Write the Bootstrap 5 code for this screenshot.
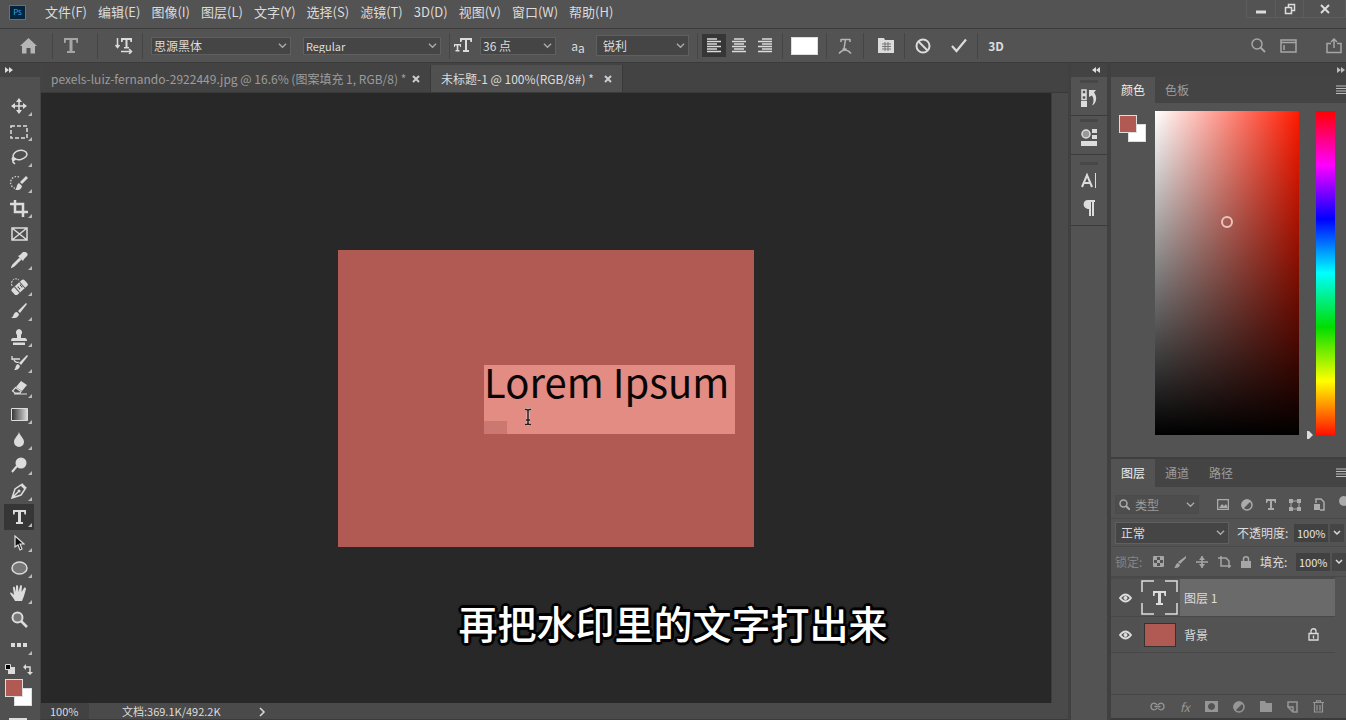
<!DOCTYPE html>
<html lang="zh-CN">
<head>
<meta charset="utf-8">
<meta name="viewport" content="width=device-width, initial-scale=1">
<title>未标题-1</title>
<link href="https://cdn.jsdelivr.net/npm/bootstrap@5.3.0/dist/css/bootstrap.min.css" rel="stylesheet">
<style>
:root{--bar:#535353;--dark:#434343;--line:#3b3b3b;--field:#454545;--ink:#dcdcdc;--dim:#9c9c9c;--brick:#b05a53}
body{background:var(--bar);color:var(--ink);font-family:"Noto Sans CJK SC",sans-serif;font-size:12px;line-height:16px}
button,a.menu-item{background:none;border:0;padding:0;color:inherit;text-decoration:none;white-space:nowrap}
svg{display:block;fill:none;stroke:currentColor;stroke-width:1.5}
svg .f{fill:currentColor;stroke:none}
.ib{display:flex;align-items:center;justify-content:center;flex:none}
.w22{width:22px}.w24{width:24px}.w26{width:26px}.w36{width:36px}.w48{width:48px}
.menubar{height:28px}
.menubar nav{gap:11px;margin-left:19px;padding-bottom:4px;font-size:13px}
.logo{width:17px;height:15px;margin:0 0 3px 9px;background:#04233d;border:1px solid #2387b8;color:#31a8e0;font-size:8px;line-height:12px;text-align:center}
.winbtns{border:1px solid #5d5d5d;border-top:0;height:18px;align-self:flex-start}
.winbtns button{height:18px;width:28px}
.winbtns button:last-child{width:42px}
.winbtns button+button{border-left:1px solid #5d5d5d}
.optbar{height:35px;border-top:1px solid var(--line);border-bottom:1px solid var(--line)}
.vsep{width:1px;height:26px;background:#454545;flex:none}
.form-select.ps{width:auto;min-height:0;height:18px;border:1px solid #5f5f5f;border-radius:0;background-color:var(--field);color:var(--ink);font-size:12px;line-height:14px;padding:0 18px 0 2px;background-position:right 3px center;background-size:9px 9px;flex:none;
--bs-form-select-bg-img:url("data:image/svg+xml,%3csvg xmlns='http://www.w3.org/2000/svg' viewBox='0 0 10 10'%3e%3cpath fill='none' stroke='%23aaaaaa' stroke-width='1.5' d='M1 3l4 4 4-4'/%3e%3c/svg%3e");background-image:var(--bs-form-select-bg-img)}
.ps.family{width:140px}
.form-select.ps.style{width:138px;margin-left:12px;font-size:11px}
.ps.size{width:76px}
.ps.aa{width:93px;height:21px;padding-left:6px}
.ps.blend{width:114px;height:22px;padding-left:5px}
.form-select.ps.kind{width:84px;height:19px;padding-left:19px;background-color:#4d4d4d;border-color:#4b4b4b;color:var(--dim)}
.on{background:#363636}
.white-chip{width:27px;height:18px;background:#fff;border:1px solid #ddd}
.tools{width:41px;background:#505050;border-right:1px solid #444;flex:none}
.grip{height:14px;background:var(--dark);flex:none}
.tool{position:relative;min-height:0;flex:1 1 0;width:30px;margin-left:4px}
.tool.more::after{content:"";position:absolute;right:2px;bottom:3px;border:2px solid transparent;border-right-color:#bbb;border-bottom-color:#bbb}
.toolfoot{height:62px;padding:6px 0 0 5px}
.swpair{display:grid;grid-template-columns:9px 9px 9px;grid-template-rows:9px 9px 9px}
.swpair i{border:1px solid #ddd}
.swpair i:first-child{background:#fff;grid-area:2/2/4/4}
.swpair i:last-child{background:var(--brick);grid-area:1/1/3/3;z-index:1}
.doctabs{height:30px;background:var(--dark);border-bottom:1px solid #393939}
.doctab{height:27px;border-right:1px solid #393939;color:var(--dim);padding:0 2px 0 10px}
.doctab.current{background:#505050;color:var(--ink)}
.doctab .t1{width:353px}.doctab .t2{width:155px}
.stage{background:#282828}
.art{width:416px;height:297px;background:var(--brick);padding:115px 0 0 146px}
.picked{position:relative;width:251px;height:69px;background:#e38c83;color:#0a0606;font-size:40px;line-height:32px;white-space:nowrap}
.patch{position:absolute;left:0;bottom:0;width:23px;height:13px;background:#cb7870}
.ibeam{position:absolute;left:39px;top:43px;color:#222}
.vscroll{width:17px;background:#4a4a4a;border-left:1px solid #3c3c3c}
.statusbar{height:17px;border-bottom:1px solid #3b3b3b;background:#4a4a4a;font-size:11px;line-height:16px}
.zoomval{width:48px;background:#424242;padding-left:9px}
.docsize{margin-left:33px;width:137px}
.dock{width:39px;border-left:3px solid #414141}
.dockgroup{border-bottom:1px solid var(--line);padding-bottom:3px}
.dockgroup::before{content:"";display:block;width:18px;height:3px;background:#474747;margin:0 auto;position:relative;top:3px}
.dockgroup button{width:100%;height:28px}
.dockgroup button:first-child{margin-top:4px}
.side{width:239px;border-left:4px solid #404040;flex:none;overflow:hidden}
.ptabs{background:#444;color:var(--dim);flex:none}
.ptabs button{width:44px}
.ptabs button.pmenu{width:11px}
.ptabs button.current{background:var(--bar);color:#eee}
.colorpanel{height:380px}
.spectrum{background:linear-gradient(to top,#000,transparent),linear-gradient(to right,#fff,#ff1a00);width:144px;height:324px;position:relative}
.pick{position:absolute;left:66px;top:105px;width:12px;height:12px;border:2px solid #e9c4bd;border-radius:50%}
.hue{width:19px;height:324px;background:linear-gradient(red,#f0f,#00f,#0ff,#0d0,#ff0,#f10)}
.huemark{width:17px;padding-left:7px;margin-bottom:-6px}
.lrow{border-bottom:1px solid #494949;flex:none}
.pct{width:34px;height:18px;border:0;background:#414141;color:#e6e6e6;font-size:11px;padding:0 0 0 3px}
.dropbit{width:14px;height:18px;background:var(--field);margin-left:2px}
.layer{height:36px;margin-right:11px;border-bottom:1px solid #484848;flex:none}
.layer.chosen{height:40px;background:#6a6a6a;border-top:2px solid #4b4b4b}
.eye{width:29px;align-self:stretch;background:#515151}
.thumb{width:32px;height:24px;background:var(--brick);border:1px solid #333;margin:0 4px}
.lfoot{height:26px;border-top:1px solid #464646;border-bottom:2px solid #3b3b3b;color:#969696;padding:0 22px 0 39px}
.caption-line{position:absolute;left:0;right:0;top:83%;font-size:39px;line-height:48px;font-weight:500;color:#fff;text-align:center;pointer-events:none;
text-shadow:-3px 0 #000,3px 0 #000,0 -3px #000,0 3px #000,-2px -2px #000,2px -2px #000,-2px 2px #000,2px 2px #000,0 0 4px #000}
</style>
<script src="https://cdn.jsdelivr.net/npm/bootstrap@5.3.0/dist/js/bootstrap.bundle.min.js"></script>
</head>
<body class="vh-100 d-flex flex-column overflow-hidden position-relative">

<header class="menubar d-flex align-items-center flex-shrink-0">
  <div class="logo">Ps</div>
  <nav class="d-flex">
    <a class="menu-item" href="#">文件(F)</a><a class="menu-item" href="#">编辑(E)</a><a class="menu-item" href="#">图像(I)</a><a class="menu-item" href="#">图层(L)</a><a class="menu-item" href="#">文字(Y)</a><a class="menu-item" href="#">选择(S)</a><a class="menu-item" href="#">滤镜(T)</a><a class="menu-item" href="#">3D(D)</a><a class="menu-item" href="#">视图(V)</a><a class="menu-item" href="#">窗口(W)</a><a class="menu-item" href="#">帮助(H)</a>
  </nav>
  <div class="winbtns d-flex ms-auto">
    <button class="ib" aria-label="最小化"><svg width="12" height="12"><path d="M1 9h10" stroke-width="3"/></svg></button>
    <button class="ib" aria-label="还原"><svg width="12" height="12"><path d="M4.500 4V1.500h6v6H8M1.500 4.500h6v6h-6z"/></svg></button>
    <button class="ib" aria-label="关闭"><svg width="10" height="10"><path d="M1 1l8 8M9 1l-8 8" stroke-width="2"/></svg></button>
  </div>
</header>

<section class="optbar d-flex align-items-center flex-shrink-0">
  <button class="ib w48 ms-1" aria-label="主页"><svg width="17" height="16" color="#b5b5b5"><path class="f" d="M8.500 0L17 8h-2v7.500h-4.500V10h-4v5.500H2V8H0z"/></svg></button>
  <span class="vsep"></span>
  <button class="ib w36" aria-label="文字工具"><svg width="14" height="15" color="#a5a5a5"><path class="f" d="M0 0h14v5h-1.500L12 2H8.500v11H11v2H3v-2h2.500V2H2l-.5 3H0z"/></svg></button>
  <span class="vsep ms-2"></span>
  <button class="ib w36 ms-2" aria-label="切换文本取向"><svg width="18" height="17"><path d="M2.500 1v9M.5 8l2 2.500 2-2.500M6 14.500h10M14 12l2.500 2.500L14 17"/><path class="f" d="M6 1h11v4h-1.500L15 3h-2.500v7H14v1.500H9V10h1.500V3H8l-.5 2H6z"/></svg></button>
  <span class="vsep"></span>
  <select class="form-select ps family ms-2" aria-label="字体"><option>思源黑体</option></select>
  <select class="form-select ps style" aria-label="字体样式"><option>Regular</option></select>
  <span class="vsep ms-2"></span>
  <span class="ib w26"><svg width="18" height="15"><path class="f" d="M6 0h12v4h-1.500L16 2h-3v10h2v2H9v-2h2V2H8l-.5 2H6zM0 6h7v3H6V7.500H4.300V12H5.500v1.500h-4V12h1.200V7.500H1V9H0z"/></svg></span>
  <select class="form-select ps size ms-1" aria-label="字号"><option>36 点</option></select>
  <span class="ib w36 ms-1"><span>a</span><span class="pt-1">a</span></span>
  <select class="form-select ps aa" aria-label="消除锯齿"><option>锐利</option></select>
  <span class="vsep ms-2"></span>
  <div class="btn-group ms-1">
    <button class="ib w24 on py-1" aria-label="左对齐"><svg width="14" height="15"><path d="M0 1h10M0 3.500h14M0 6h10M0 8.500h14M0 11h10M0 13.500h14"/></svg></button>
    <button class="ib w26 py-1 ms-0" aria-label="居中对齐"><svg width="14" height="15"><path d="M2 1h10M0 3.500h14M2 6h10M0 8.500h14M2 11h10M0 13.500h14"/></svg></button>
    <button class="ib w26 py-1 ms-0" aria-label="右对齐"><svg width="14" height="15"><path d="M4 1h10M0 3.500h14M4 6h10M0 8.500h14M4 11h10M0 13.500h14"/></svg></button>
  </div>
  <span class="vsep ms-1"></span>
  <button class="white-chip ms-2" aria-label="文本颜色"></button>
  <span class="vsep ms-2"></span>
  <button class="ib w36" aria-label="变形文字"><svg width="14" height="16" color="#b5b5b5"><path d="M3 1.500h9M7.500 1.500L6 11M4.500 11h4M1 15.500q6-7 12 0M3 1v3M12 1v3"/></svg></button>
  <span class="vsep"></span>
  <button class="ib w36 ms-1" aria-label="字符面板"><svg width="16" height="15"><path class="f" d="M0 0h6l1 2h9v13H0z"/><path d="M4 6h9M4 8.500h9M4 11h9M7 4v9M10 4v9" stroke="#777" stroke-width="1"/></svg></button>
  <span class="vsep"></span>
  <button class="ib w36" aria-label="取消"><svg width="16" height="16"><circle cx="8" cy="8" r="6.500" stroke-width="2"/><path d="M3.500 3.500l9 9" stroke-width="2"/></svg></button>
  <button class="ib w36" aria-label="提交"><svg width="16" height="15"><path d="M1 8l4.500 5L15 1.500" stroke-width="2.200"/></svg></button>
  <span class="vsep"></span>
  <button class="ib w36 fw-bold" aria-label="3D">3D</button>
  <div class="d-flex ms-auto" style="color:#a6a6a6">
    <button class="ib w24" aria-label="搜索"><svg width="15" height="15"><circle cx="6" cy="6" r="5"/><path d="M9.500 9.500L14 14" stroke-width="2"/></svg></button>
    <button class="ib w36" aria-label="工作区"><svg width="17" height="14"><path d="M1 1h15v12H1zM1 3.500h15"/><path d="M4 6v5"/></svg></button>
    <button class="ib w24 ms-3" aria-label="共享"><svg width="16" height="16"><path d="M5 5.500H1v9h14v-9h-4M8 10V1M5 4l3-3 3 3"/></svg></button>
  </div>
</section>

<main class="d-flex flex-grow-1" style="min-height:0">
  <aside class="tools d-flex flex-column">
    <div class="grip"><svg class="ms-1 pt-1" width="12" height="10"><path class="f" d="M1 0l4 3-4 3zM5 0l4 3-4 3z"/></svg></div>
    <div class="d-flex flex-column flex-grow-1 pt-3">
      <button class="tool ib more" aria-label="移动"><svg width="16" height="16"><path d="M8 2v12M2 8h12"/><path class="f" d="M8 0l3 4H5zM8 16l3-4H5zM0 8l4-3v6zM16 8l-4-3v6z"/></svg></button>
      <button class="tool ib more" aria-label="矩形选框"><svg width="18" height="14"><path d="M1 1h16v12H1z" stroke-dasharray="4 2"/></svg></button>
      <button class="tool ib more" aria-label="套索"><svg width="18" height="16"><ellipse cx="10" cy="6" rx="7" ry="4.500" transform="rotate(-12 10 6)"/><path d="M3.500 8c-3 2 0 4 1.500 2.500S2 9 3 13l2 2"/></svg></button>
      <button class="tool ib more" aria-label="快速选择"><svg width="18" height="16"><path d="M9 2a6 6 0 1 0 0 11" stroke-dasharray="1.500 1.500" stroke-width="1.200"/><path class="f" d="M16 1l2 2-6 6-2-2zM9 8l3 3c-1 5-5 4-7 4 2-1 1-5 4-7z"/></svg></button>
      <button class="tool ib more" aria-label="裁剪"><svg width="18" height="17"><path d="M0 4h13v9M5 0v12h13M13 12v5" stroke-width="2.500"/></svg></button>
      <button class="tool ib" aria-label="图框"><svg width="17" height="14"><path d="M1 1h15v12H1zM1 1l15 12M16 1L1 13"/></svg></button>
      <button class="tool ib more" aria-label="吸管"><svg width="17" height="16"><path d="M9 6l-7 7-1 2 2-1 7-7"/><path class="f" d="M7 4l2-1 3-3c3-1 6 2 4 4l-3 3-1 2z"/></svg></button>
      <button class="tool ib more" aria-label="污点修复"><svg width="18" height="18"><g transform="rotate(-42 10 10)"><rect class="f" x="1" y="6" width="17" height="8" rx="2"/><path d="M6 6v8M13 6v8" stroke="#555" stroke-width="1"/><path d="M8 9h1M11 9h1M8 11h1M11 11h1" stroke="#444"/></g><path d="M2 9c-2-6 3-9 7-6" stroke-dasharray="2 1" stroke-width="1"/></svg></button>
      <button class="tool ib more" aria-label="画笔"><svg width="16" height="16"><path class="f" d="M15 0l1 1-7 9-2-2zM6 9l2 2c-1 5-6 4-8 4 3-1 2-6 6-6z"/></svg></button>
      <button class="tool ib more" aria-label="仿制图章"><svg width="16" height="16"><path class="f" d="M8 0a3.500 3.500 0 0 1 2 6v3h4c1 0 2 1 2 3H0c0-2 1-3 2-3h4V6a3.500 3.500 0 0 1 2-6zM2 13.500h12V16H2z"/></svg></button>
      <button class="tool ib more" aria-label="历史记录画笔"><svg width="17" height="16"><path d="M1 4h8M1 1v4M3 5c1 2 3 3 5 2" stroke-width="1.300"/><path class="f" d="M16 0l1 1-7 9-2-2zM7 9l2 2c-1 4-4 4-6 4 2-1 1-5 4-6z"/></svg></button>
      <button class="tool ib more" aria-label="橡皮擦"><svg width="17" height="14"><path class="f" d="M10 0l6 4-5 6-6-4z"/><path d="M4.500 6.500l5.500 4-1 1.500H4L1.500 10zM3 13h13" stroke-width="1.200"/></svg></button>
      <button class="tool ib more" aria-label="渐变"><svg width="17" height="13"><defs><linearGradient id="gr"><stop stop-color="#333"/><stop offset="1" stop-color="#ddd"/></linearGradient></defs><path d="M.5 .5h16v12H.5z" fill="url(#gr)" stroke-width="1"/></svg></button>
      <button class="tool ib more" aria-label="模糊"><svg width="12" height="15"><path class="f" d="M6 0c1 4 5 6 5 10a5 5 0 0 1-10 0c0-4 4-6 5-10z"/></svg></button>
      <button class="tool ib more" aria-label="减淡"><svg width="16" height="16"><circle class="f" cx="10" cy="6" r="5.500"/><path d="M6 9l-5 6" stroke-width="2"/></svg></button>
      <button class="tool ib more" aria-label="钢笔"><svg width="16" height="16"><path d="M1 15L4 6l6-4 4 4-4 6zM1 15l6-6"/><path class="f" d="M11 0l5 5-2 1-4-4z"/><circle class="f" cx="8" cy="8" r="1.500"/></svg></button>
      <button class="tool ib more on" aria-label="横排文字"><svg width="13" height="14"><path class="f" d="M0 0h13v4.500h-1.500L11 2H8v10h2v2H3v-2h2V2H2l-.5 2.500H0z"/></svg></button>
      <button class="tool ib more" aria-label="路径选择"><svg width="12" height="16"><path d="M2 1v11l3-2 2 5 2-1-2-5h4z" fill="#111" stroke-width="1.200"/></svg></button>
      <button class="tool ib more" aria-label="椭圆"><svg width="17" height="14"><ellipse cx="8.500" cy="7" rx="7.500" ry="6" fill="#777"/></svg></button>
      <button class="tool ib more" aria-label="抓手"><svg width="18" height="17"><path class="f" d="M5 16C4 13 1 11 0 8c1-1 2 0 4 2L3 3c0-2 2-1 2 0l1 4V1c0-1 2-1 2 0l.5 6L10 1c0-1 2-1 2 0l-.5 6L14 3c1-1 2 0 2 1l-2 7-2 5z"/></svg></button>
      <button class="tool ib" aria-label="缩放"><svg width="17" height="17"><circle cx="6.500" cy="6.500" r="5" fill="#777" stroke-width="2"/><path d="M10 10l6 6" stroke-width="2.500"/></svg></button>
      <button class="tool ib more" aria-label="编辑工具栏"><svg width="17" height="4"><path class="f" d="M0 0h4v4H0zM6 0h4v4H6zM12 0h4v4h-4z"/></svg></button>
    </div>
    <div class="toolfoot">
      <div class="d-flex gap-2 mb-1"><svg width="10" height="10"><path class="f" d="M3 3h7v7H3z"/><path d="M.5 .5h5v5h-5z" fill="#000" stroke-width="1"/></svg><svg width="10" height="11"><path d="M2 3h5v6"/><path class="f" d="M0 3l3-3v6zM7 11L4 8h6z"/></svg></div>
      <div class="swpair"><i></i><i></i></div>
      <svg class="ms-1 mt-2 pt-1" width="20" height="10"><path d="M1 1h16v8H1z" stroke-width="2"/></svg>
    </div>
  </aside>

  <section class="d-flex flex-column flex-grow-1" style="min-width:0">
    <div class="doctabs d-flex align-items-end flex-shrink-0">
      <div class="doctab d-flex align-items-center"><span class="t1 text-nowrap">pexels-luiz-fernando-2922449.jpg @ 16.6% (图案填充 1, RGB/8) *</span><button class="ib w24" aria-label="关闭标签"><svg width="8" height="8" color="#ccc"><path d="M1 1l6 6M7 1L1 7" stroke-width="2"/></svg></button></div>
      <div class="doctab current d-flex align-items-center"><span class="t2 text-nowrap">未标题-1 @ 100%(RGB/8#) *</span><button class="ib w24" aria-label="关闭标签"><svg width="8" height="8" color="#ccc"><path d="M1 1l6 6M7 1L1 7" stroke-width="2"/></svg></button></div>
    </div>
    <div class="d-flex flex-grow-1">
      <div class="stage flex-grow-1 d-flex align-items-center justify-content-center">
        <div class="art"><div class="picked">Lorem Ipsum<span class="patch"></span><svg class="ibeam" width="10" height="18"><path d="M2 1.500h2l1 1 1-1h2M2 16.500h2l1-1 1 1h2M5 2v14M3 12h4" stroke="#eee" stroke-width="3" opacity=".5"/><path d="M2 1.500h2l1 1 1-1h2M2 16.500h2l1-1 1 1h2M5 2v14M3 12h4"/></svg></div></div>
      </div>
      <div class="vscroll"></div>
    </div>
    <footer class="statusbar d-flex flex-shrink-0"><span class="zoomval">100%</span><span class="docsize text-nowrap">文档:369.1K/492.2K</span><svg class="mt-1" width="7" height="11"><path d="M1 1l4 4-4 4"/></svg></footer>
  </section>

  <div class="dock flex-shrink-0">
    <div class="grip"><svg class="ms-auto me-1 pt-1" width="12" height="10"><path class="f" d="M5 0L1 3l4 3zM9 0L5 3l4 3z"/></svg></div>
    <div class="dockgroup"><button class="ib" aria-label="历史记录"><svg width="16" height="18"><path d="M1 1h4v4H1zM1 6.500h4v4H1z"/><path class="f" d="M0 12h6v6H0zM8 1h7l-2 2.500c4 5 2 11-2 13 2-4 2-7 0-10L8 8z"/></svg></button></div>
    <div class="dockgroup"><button class="ib" aria-label="库"><svg width="16" height="17"><circle cx="5" cy="5" r="4" fill="#999"/><path class="f" d="M11 0h5v4h-5zM11 6h5v4h-5zM0 12h16v5H0z"/></svg></button></div>
    <div class="dockgroup pt-1"><button class="ib" aria-label="字符"><svg width="16" height="17"><path d="M1 15L6 3l5 12M3 11h6" stroke-width="2"/><path d="M14.500 1v15" stroke-width="1"/></svg></button><button class="ib" aria-label="段落"><svg width="12" height="16"><path class="f" d="M5 0h7v2h-1v14H9V2H8v14H6V9C-1 9-1 0 5 0z"/></svg></button></div>
  </div>

  <aside class="side d-flex flex-column">
    <div class="grip"><svg class="ms-auto pt-1" style="color:#bbb" width="9" height="10"><path class="f" d="M0 0l4 3-4 3zM4 0l4 3-4 3z"/></svg></div>
    <section class="colorpanel d-flex flex-column flex-shrink-0">
      <div class="ptabs d-flex" style="height:26px"><button class="current">颜色</button><button>色板</button><button class="ib ms-auto pmenu" aria-label="面板菜单"><svg width="10" height="10" color="#bbb"><path d="M0 1h10M0 3.500h10M0 6h10M0 8.500h10" stroke-width="1.200"/></svg></button></div>
      <div class="d-flex pt-2">
        <div class="pt-1 ps-2" style="width:44px"><div class="swpair"><i></i><i></i></div></div>
        <div class="spectrum"><span class="pick"></span></div>
        <div class="huemark align-self-end"><svg width="8" height="12"><path class="f" d="M1 2h2l4 4-4 4H1z"/></svg></div>
        <div class="hue"></div>
      </div>
    </section>
    <section class="d-flex flex-column flex-grow-1 border-top border-2" style="border-color:#3f3f3f!important">
      <div class="ptabs d-flex" style="height:28px"><button class="current">图层</button><button>通道</button><button>路径</button><button class="ib ms-auto pmenu" aria-label="面板菜单"><svg width="10" height="10" color="#bbb"><path d="M0 1h10M0 3.500h10M0 6h10M0 8.500h10" stroke-width="1.200"/></svg></button></div>
      <div class="lrow d-flex align-items-center pt-1 ps-1" style="height:32px;color:#ababab">
        <svg width="11" height="11" style="margin-right:-15px;margin-left:4px;z-index:1"><circle cx="4.500" cy="4.500" r="3.500"/><path d="M7 7l4 4" stroke-width="2"/></svg>
        <select class="form-select ps kind" aria-label="图层类型"><option>类型</option></select>
        <div class="d-flex flex-grow-1 ps-2">
          <button class="ib w24 ms-1" aria-label="像素"><svg width="12" height="11"><path d="M.5 .5h11v10H.5z"/><path class="f" d="M2 9l3-4 2 2 2-2 2 4z"/></svg></button>
          <button class="ib w24" aria-label="调整"><svg width="12" height="12"><circle cx="6" cy="6" r="5"/><path class="f" d="M2 10A5.500 5.500 0 0 1 10 2z"/></svg></button>
          <button class="ib w24" aria-label="文字"><svg width="10" height="11"><path class="f" d="M0 0h10v4H9L8 2H6v7h2v2H2V9h2V2H2L1 4H0z"/></svg></button>
          <button class="ib w24" aria-label="形状"><svg width="12" height="12"><path d="M2 2h8v8H2z" stroke-width="1"/><path class="f" d="M0 0h4v4H0zM8 0h4v4H8zM0 8h4v4H0zM8 8h4v4H8z"/></svg></button>
          <button class="ib w24" aria-label="智能对象"><svg width="11" height="13"><path d="M2 5V1h5l3 3v8H6"/><path class="f" d="M0 6h6v6H0z"/></svg></button>
        </div>
        <svg width="7" height="20"><circle class="f" cx="5" cy="6" r="5"/></svg>
      </div>
      <div class="lrow d-flex align-items-center ps-1" style="height:28px">
        <select class="form-select ps blend" aria-label="混合模式"><option>正常</option></select>
        <label class="text-nowrap ms-2" style="width:57px" for="op">不透明度:</label><input id="op" class="pct" value="100%"><button class="dropbit ib" aria-label="不透明度滑块"><svg width="8" height="6"><path d="M1 1l3 3 3-3"/></svg></button>
      </div>
      <div class="lrow d-flex align-items-center" style="height:30px">
        <span class="ms-1 text-nowrap" style="width:32px;color:#858585">锁定:</span>
        <div class="d-flex flex-grow-1" style="color:#a6a6a6">
          <button class="ib w22" aria-label="锁定透明像素"><svg width="11" height="11"><path d="M.5 .5h10v10H.5z" stroke-width="1"/><path class="f" d="M1 1h3v3H1zM7 1h3v3H7zM4 4h3v3H4zM1 7h3v3H1zM7 7h3v3H7z"/></svg></button>
          <button class="ib w22" aria-label="锁定图像像素"><svg width="12" height="12"><path class="f" d="M12 0v2L6 8 4 6zM4 7l2 2c-1 3-4 3-6 3 2-1 1-4 4-5z"/></svg></button>
          <button class="ib w22" aria-label="锁定位置"><svg width="12" height="12"><path d="M0 6h12M6 0v12"/><path class="f" d="M3 4l3-4 3 4zM3 8l3 4 3-4z"/></svg></button>
          <button class="ib w22" aria-label="防止自动嵌套"><svg width="13" height="12"><path d="M0 2h8l3 3v7M3 0v10h10"/></svg></button>
          <button class="ib w22" aria-label="锁定全部"><svg width="10" height="12"><path d="M2.500 5V3c0-3 5-3 5 0v2"/><path class="f" d="M0 5h10v7H0z"/></svg></button>
        </div>
        <label class="text-nowrap" style="width:36px" for="fl">填充:</label><input id="fl" class="pct" value="100%"><button class="dropbit ib" aria-label="填充滑块"><svg width="8" height="6"><path d="M1 1l3 3 3-3"/></svg></button>
      </div>
      <div class="layer chosen d-flex align-items-center">
        <button class="ib eye" aria-label="可见性"><svg width="13" height="10"><path d="M1 5q5.500-7 11 0q-5.500 7-11 0z" stroke-width="2"/><circle class="f" cx="6.500" cy="5" r="2"/></svg></button>
        <svg width="40" height="37" style="background:#555"><path d="M2 13V2h12M25 2h12v11M37 24v11H25M14 35H2V24" stroke-width="1.500"/><path class="f" d="M13 12h13v5h-1.500L24 14h-3v10h2v2h-7v-2h2V14h-3l-.5 3H13z"/></svg>
        <span class="ms-1">图层 1</span>
      </div>
      <div class="layer d-flex align-items-center">
        <button class="ib eye" aria-label="可见性"><svg width="13" height="10"><path d="M1 5q5.500-7 11 0q-5.500 7-11 0z" stroke-width="2"/><circle class="f" cx="6.500" cy="5" r="2"/></svg></button>
        <span class="thumb"></span><span class="ms-1">背景</span>
        <svg class="ms-auto me-3" width="11" height="13"><path d="M1 5.500h9V12H1zM3 5V3c0-3 5-3 5 0v2M5.500 7.500v3" stroke-width="1.300"/></svg>
      </div>
      <div class="lfoot d-flex align-items-center justify-content-between mt-auto">
        <button aria-label="链接图层"><svg width="15" height="9"><path d="M7 3C5 0 1 1 1 4.500S5 9 7 6M8 3c2-3 6-2 6 1.500S10 9 8 6M4.500 4.500h6" stroke-width="1.300"/></svg></button>
        <button class="fst-italic" aria-label="图层样式">fx</button>
        <button aria-label="蒙版"><svg width="13" height="11"><path class="f" fill-rule="evenodd" d="M0 0h13v11H0zM6.500 2a3.500 3.500 0 1 0 .01 0z"/></svg></button>
        <button aria-label="调整图层"><svg width="12" height="12"><circle cx="6" cy="6" r="5"/><path class="f" d="M2 10A5.500 5.500 0 0 1 10 2z"/></svg></button>
        <button aria-label="新建组"><svg width="12" height="11"><path class="f" d="M0 0h5l1 2h6v9H0z"/></svg></button>
        <button aria-label="新建图层"><svg width="11" height="12"><path d="M1 6V1h9v10H6L1 6h5v5"/></svg></button>
        <button aria-label="删除"><svg width="11" height="13"><path d="M0 2.500h11M3.500 2V.8h4V2M1.500 3v9h8V3M4 5v5.500M7 5v5.500" stroke-width="1.200"/></svg></button>
      </div>
    </section>
  </aside>
</main>
<div class="caption-line">再把水印里的文字打出来</div>
</body>
</html>
